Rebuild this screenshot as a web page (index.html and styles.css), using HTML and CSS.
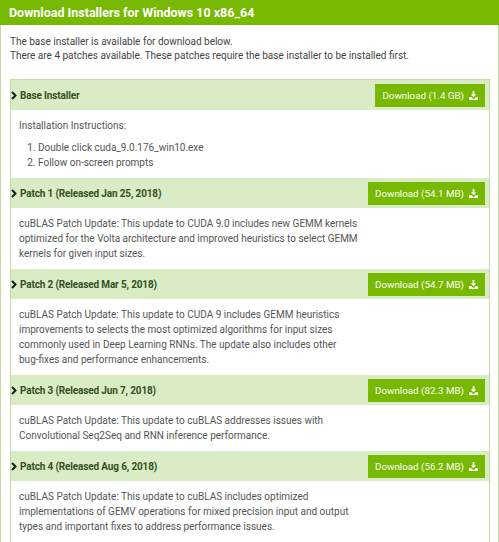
FILE: index.html
```html
<!DOCTYPE html>
<html lang="en">
<head>
    <meta charset="UTF-8">
    <title>CUDA Toolkit 9.0 Downloads</title>
    <link rel="stylesheet" href="styles.css">
</head>
<body>
    <div class="panel">
        <div class="panel-title">Download Installers for Windows 10 x86_64</div>
        <div class="panel-body">
            <p class="intro">
                The base installer is available for download below.<br>
                There are 4 patches available. These patches require the base installer to be installed first.
            </p>

            <div class="installers">
                <div class="installer">
                    <div class="installer-head">
                        <span class="installer-name">
                            <svg class="chevron" viewBox="0 0 6 9"><path d="M1 1l3.5 3.5L1 8" /></svg>
                            Base Installer
                        </span>
                        <a href="#" class="download-btn">Download (1.4 GB)
                            <svg class="dl-icon" viewBox="0 0 10 10"><path d="M4 0h2v4h2L5 7 2 4h2z" /><path d="M0 7h2.6l2.4 2.2L7.4 7H10v3H0z" /></svg>
                        </a>
                    </div>
                    <div class="installer-body">
                        <p class="instructions">Installation Instructions:</p>
                        <ol class="steps">
                            <li>Double click cuda_9.0.176_win10.exe</li>
                            <li>Follow on-screen prompts</li>
                        </ol>
                    </div>
                </div>

                <div class="installer">
                    <div class="installer-head">
                        <span class="installer-name">
                            <svg class="chevron" viewBox="0 0 6 9"><path d="M1 1l3.5 3.5L1 8" /></svg>
                            Patch 1 (Released Jan 25, 2018)
                        </span>
                        <a href="#" class="download-btn">Download (54.1 MB)
                            <svg class="dl-icon" viewBox="0 0 10 10"><path d="M4 0h2v4h2L5 7 2 4h2z" /><path d="M0 7h2.6l2.4 2.2L7.4 7H10v3H0z" /></svg>
                        </a>
                    </div>
                    <div class="installer-body">
                        <p>cuBLAS Patch Update: This update to CUDA 9.0 includes new GEMM kernels optimized for the Volta architecture and improved heuristics to select GEMM kernels for given input sizes.</p>
                    </div>
                </div>

                <div class="installer">
                    <div class="installer-head">
                        <span class="installer-name">
                            <svg class="chevron" viewBox="0 0 6 9"><path d="M1 1l3.5 3.5L1 8" /></svg>
                            Patch 2 (Released Mar 5, 2018)
                        </span>
                        <a href="#" class="download-btn">Download (54.7 MB)
                            <svg class="dl-icon" viewBox="0 0 10 10"><path d="M4 0h2v4h2L5 7 2 4h2z" /><path d="M0 7h2.6l2.4 2.2L7.4 7H10v3H0z" /></svg>
                        </a>
                    </div>
                    <div class="installer-body">
                        <p>cuBLAS Patch Update: This update to CUDA 9 includes GEMM heuristics improvements to selects the most optimized algorithms for input sizes commonly used in Deep Learning RNNs. The update also includes other <span class="nowrap">bug-fixes</span> and performance enhancements.</p>
                    </div>
                </div>

                <div class="installer">
                    <div class="installer-head">
                        <span class="installer-name">
                            <svg class="chevron" viewBox="0 0 6 9"><path d="M1 1l3.5 3.5L1 8" /></svg>
                            Patch 3 (Released Jun 7, 2018)
                        </span>
                        <a href="#" class="download-btn">Download (82.3 MB)
                            <svg class="dl-icon" viewBox="0 0 10 10"><path d="M4 0h2v4h2L5 7 2 4h2z" /><path d="M0 7h2.6l2.4 2.2L7.4 7H10v3H0z" /></svg>
                        </a>
                    </div>
                    <div class="installer-body">
                        <p>cuBLAS Patch Update: This update to cuBLAS addresses issues with Convolutional Seq2Seq and RNN inference performance.</p>
                    </div>
                </div>

                <div class="installer">
                    <div class="installer-head">
                        <span class="installer-name">
                            <svg class="chevron" viewBox="0 0 6 9"><path d="M1 1l3.5 3.5L1 8" /></svg>
                            Patch 4 (Released Aug 6, 2018)
                        </span>
                        <a href="#" class="download-btn">Download (56.2 MB)
                            <svg class="dl-icon" viewBox="0 0 10 10"><path d="M4 0h2v4h2L5 7 2 4h2z" /><path d="M0 7h2.6l2.4 2.2L7.4 7H10v3H0z" /></svg>
                        </a>
                    </div>
                    <div class="installer-body">
                        <p>cuBLAS Patch Update: This update to cuBLAS includes optimized implementations of GEMV operations for mixed precision input and output types and important fixes to address performance issues.</p>
                    </div>
                </div>
            </div>
        </div>
    </div>
</body>
</html>
```

FILE: styles.css
```css
:root {
    --nv-green: #76b900;
    --light-green: #d9ecc6;
    --border-green: #c3dba3;
}

body {
    margin: 0;
    font-family: Roboto, 'Liberation Sans', sans-serif;
    background: white;
}

.panel {
    border-left: 1px solid var(--border-green);
    border-right: 1px solid var(--border-green);
}

/* Green title bar */
.panel-title {
    background: var(--nv-green);
    color: white;
    font-weight: bold;
    font-size: 12.5px;
    height: 25px;
    line-height: 25px;
    padding: 0 9px;
    margin: 0 -1px;
}

.panel-body {
    padding: 10px 8px 0 9px;
}

.intro {
    margin: 0 0 16px;
    font-size: 10px;
    line-height: 14px;
    color: #444;
}

.installers {
    border: 1px solid var(--border-green);
}

.installer-head {
    display: flex;
    justify-content: space-between;
    align-items: center;
    height: 30px;
    background: var(--light-green);
    padding: 0 4px 0 0;
}

.installer-name {
    display: flex;
    align-items: center;
    gap: 3px;
    font-size: 10px;
    letter-spacing: -0.15px;
    font-weight: bold;
    color: #34501f;
}

.chevron {
    width: 6px;
    height: 9px;
    fill: none;
    stroke: #1c1c1c;
    stroke-width: 2;
}

.download-btn {
    display: flex;
    align-items: center;
    gap: 5px;
    height: 23px;
    padding: 0 7px;
    background: var(--nv-green);
    color: white;
    text-decoration: none;
    font-size: 9.8px;
}

.dl-icon {
    width: 9px;
    height: 9px;
    fill: white;
}

.installer-body {
    padding: 8px 9px 8px 8px;
    font-size: 10px;
    line-height: 15px;
    color: #555;
}

.installer-body p {
    margin: 0;
    max-width: 348px;
}

.instructions {
    margin-bottom: 7px !important;
}

.steps {
    margin: 0;
    padding-left: 19px;
}

.nowrap {
    white-space: nowrap;
}
```
